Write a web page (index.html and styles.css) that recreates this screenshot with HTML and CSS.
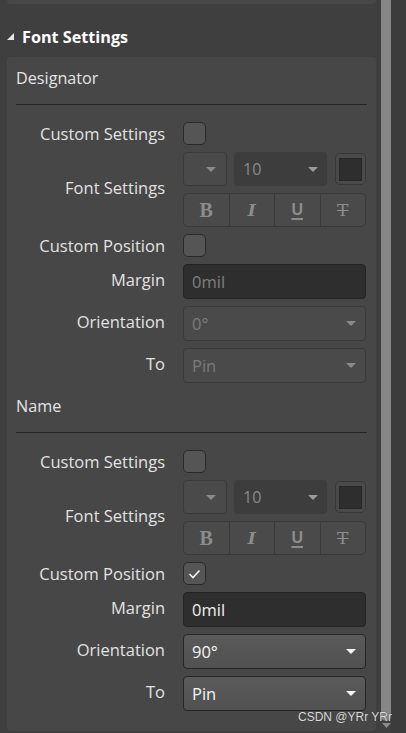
FILE: index.html
```html
<!DOCTYPE html>
<html>
<head>
<meta charset="utf-8">
<link rel="stylesheet" href="styles.css">
</head>
<body>
<div class="window">
  <div class="content">
    <div class="top-card"></div>
    <div class="header">
      <svg class="caret" width="8" height="8" viewBox="0 0 8 8"><polygon points="7,0 7,7 0,7" fill="#e6e6e6"/></svg>
      <span>Font Settings</span>
    </div>
    <div class="panel">
      <div class="section-title">Designator</div>
      <div class="sep"></div>
      <div class="grid">
        <div class="label">Custom Settings</div>
        <div class="ctl"><span class="checkbox"></span></div>

        <div class="label up">Font Settings</div>
        <div class="ctl stack">
          <div class="font-row">
            <div class="dd-small"><span class="arrow dim"></span></div>
            <div class="dd-size"><span class="val">10</span><span class="arrow"></span></div>
            <div class="swatch"><span class="swatch-in"></span></div>
          </div>
          <div class="seg">
            <span class="segb b">B</span>
            <span class="segb i">I</span>
            <span class="segb u">U</span>
            <span class="segb t">T</span>
          </div>
        </div>

        <div class="label">Custom Position</div>
        <div class="ctl"><span class="checkbox"></span></div>

        <div class="label up">Margin</div>
        <div class="ctl"><div class="input disabled">0mil</div></div>

        <div class="label up">Orientation</div>
        <div class="ctl"><div class="dd disabled"><span class="val">0°</span><span class="arrow dim"></span></div></div>

        <div class="label up">To</div>
        <div class="ctl"><div class="dd disabled"><span class="val">Pin</span><span class="arrow dim"></span></div></div>
      </div>

      <div class="section-title second">Name</div>
      <div class="sep"></div>
      <div class="grid">
        <div class="label">Custom Settings</div>
        <div class="ctl"><span class="checkbox"></span></div>

        <div class="label up">Font Settings</div>
        <div class="ctl stack">
          <div class="font-row">
            <div class="dd-small"><span class="arrow dim"></span></div>
            <div class="dd-size"><span class="val">10</span><span class="arrow"></span></div>
            <div class="swatch"><span class="swatch-in"></span></div>
          </div>
          <div class="seg">
            <span class="segb b">B</span>
            <span class="segb i">I</span>
            <span class="segb u">U</span>
            <span class="segb t">T</span>
          </div>
        </div>

        <div class="label">Custom Position</div>
        <div class="ctl"><span class="checkbox checked"><svg width="13" height="10" viewBox="0 0 13 10"><polyline points="1.5,5 5,8.5 11.5,1.5" fill="none" stroke="#f2f2f2" stroke-width="1.6"/></svg></span></div>

        <div class="label up">Margin</div>
        <div class="ctl"><div class="input">0mil</div></div>

        <div class="label up">Orientation</div>
        <div class="ctl"><div class="dd active"><span class="val">90°</span><span class="arrow light"></span></div></div>

        <div class="label up">To</div>
        <div class="ctl"><div class="dd active"><span class="val">Pin</span><span class="arrow light"></span></div></div>
      </div>
    </div>
  </div>
  <div class="scroll">
    <div class="thumb"></div>
    <svg class="down" width="9" height="6" viewBox="0 0 9 6"><polygon points="0,0 9,0 4.5,5" fill="#8c8c8c"/></svg>
  </div>
  <div class="strip"></div>
</div>
<div class="watermark">CSDN @YRr YRr</div>
</body>
</html>
```
FILE: styles.css
```css
* { box-sizing: border-box; }
html, body { margin: 0; padding: 0; }
body {
  width: 406px;
  height: 733px;
  overflow: hidden;
  background: #3f3f3f;
  font-family: "Open Sans", "Noto Sans", sans-serif;
  color: #e2e2e2;
  position: relative;
}
.window {
  display: flex;
  height: 733px;
}
.content {
  width: 381px;
  padding: 0 5px 0 7px;
}
.top-card {
  height: 4px;
  background: #474747;
  border-radius: 0 0 4px 4px;
}
.header {
  display: flex;
  align-items: center;
  height: 53px;
  padding-top: 12px;
  font-weight: bold;
  font-size: 16.2px;
  line-height: 22px;
  color: #ffffff;
}
.caret { margin: 1px 7px 0 0; }
.panel {
  background: #474747;
  border-radius: 4px;
  padding: 11px 9px 20px 9px;
  height: 674px;
}
.section-title {
  font-size: 16.2px;
  line-height: 20px;
  color: #e4e4e4;
  padding-bottom: 16px;
}
.section-title.second { margin-top: 13px; }
.sep {
  height: 1px;
  background: #262626;
  margin-bottom: 17px;
}
.grid {
  display: grid;
  grid-template-columns: 149px 183px;
  column-gap: 18px;
  row-gap: 7px;
  align-items: center;
}
.label {
  text-align: right;
  font-size: 16.5px;
  color: #e2e2e2;
  line-height: 20px;
  white-space: nowrap;
}
.label.up { padding-bottom: 4px; }
.ctl { display: flex; }
.stack { flex-direction: column; gap: 7px; }
.checkbox {
  width: 23px;
  height: 23px;
  border: 1.5px solid #2a2a2a;
  border-radius: 5px;
  background: #555555;
  display: flex;
  align-items: center;
  justify-content: center;
}
.font-row {
  display: flex;
  height: 34px;
}
.dd-small {
  width: 44px;
  height: 34px;
  background: #4a4a4a;
  border: 1px solid #3a3a3a;
  border-radius: 4px;
  display: flex;
  align-items: center;
  justify-content: flex-end;
  padding-right: 10px;
}
.dd-size {
  width: 93px;
  margin-left: 7px;
  height: 34px;
  background: #3d3d3d;
  border-radius: 4px;
  display: flex;
  align-items: center;
  justify-content: space-between;
  padding: 0 9px 0 9px;
  font-size: 16px;
  color: #8a8a8a;
}
.swatch {
  width: 31px;
  height: 32px;
  margin: 1px 0 0 8px;
  background: #4a4a4a;
  border: 1px solid #383838;
  border-radius: 5px;
  display: flex;
  align-items: center;
  justify-content: center;
}
.swatch-in {
  width: 23px;
  height: 23px;
  background: #2e2e2e;
  border: 1px solid #272727;
}
.arrow {
  width: 0;
  height: 0;
  border-left: 5px solid transparent;
  border-right: 5px solid transparent;
  border-top: 5px solid #9a9a9a;
}
.arrow.dim { border-top-color: #8a8a8a; }
.arrow.light { border-top-color: #f4f4f4; }
.seg {
  display: flex;
  height: 34px;
  border: 1px solid #3a3a3a;
  border-radius: 5px;
  background: #4a4a4a;
  overflow: hidden;
}
.segb {
  flex: 1;
  display: flex;
  align-items: center;
  justify-content: center;
  color: #8c8c8c;
  border-left: 1px solid #3a3a3a;
  font-size: 20px;
}
.segb:first-child { border-left: none; }
.segb.b { font-family: "Liberation Serif", serif; font-weight: bold; }
.segb.i { font-family: "DejaVu Serif", serif; font-style: italic; font-weight: bold; font-size: 17px; }
.segb.u { font-family: "Liberation Sans", sans-serif; font-weight: bold; text-decoration: underline; text-decoration-thickness: 2px; text-underline-offset: 3px; font-size: 16px; }
.segb.t { font-family: "DejaVu Serif", serif; text-decoration: line-through; font-size: 17px; }
.input {
  width: 183px;
  height: 35px;
  background: #2e2e2e;
  border: 1px solid #232323;
  border-radius: 4px;
  padding-left: 8px;
  display: flex;
  align-items: center;
  font-size: 16.5px;
  color: #f0f0f0;
}
.input.disabled { color: #808080; }
.dd {
  width: 183px;
  height: 35px;
  border-radius: 4px;
  display: flex;
  align-items: center;
  justify-content: space-between;
  padding: 0 9px 0 8px;
  font-size: 16.5px;
}
.dd.disabled {
  background: #4a4a4a;
  border: 1px solid #3a3a3a;
  color: #7c7c7c;
}
.dd.active {
  background: linear-gradient(#5a5a5a, #515151);
  border: 1px solid #262626;
  color: #f4f4f4;
}
.scroll {
  width: 10px;
  display: flex;
  flex-direction: column;
  align-items: center;
}
.thumb {
  width: 10px;
  height: 721px;
  background: #878787;
  border-radius: 0 0 5px 5px;
}
.down { margin-top: 2px; }
.strip {
  flex: 1;
  background: #3c3c3c;
}
.watermark {
  position: absolute;
  left: 298px;
  top: 710px;
  font-family: "Liberation Sans", Arial, sans-serif;
  font-size: 12px;
  color: #d8d8d8;
  text-shadow: 0 0 1px #333;
}
```
